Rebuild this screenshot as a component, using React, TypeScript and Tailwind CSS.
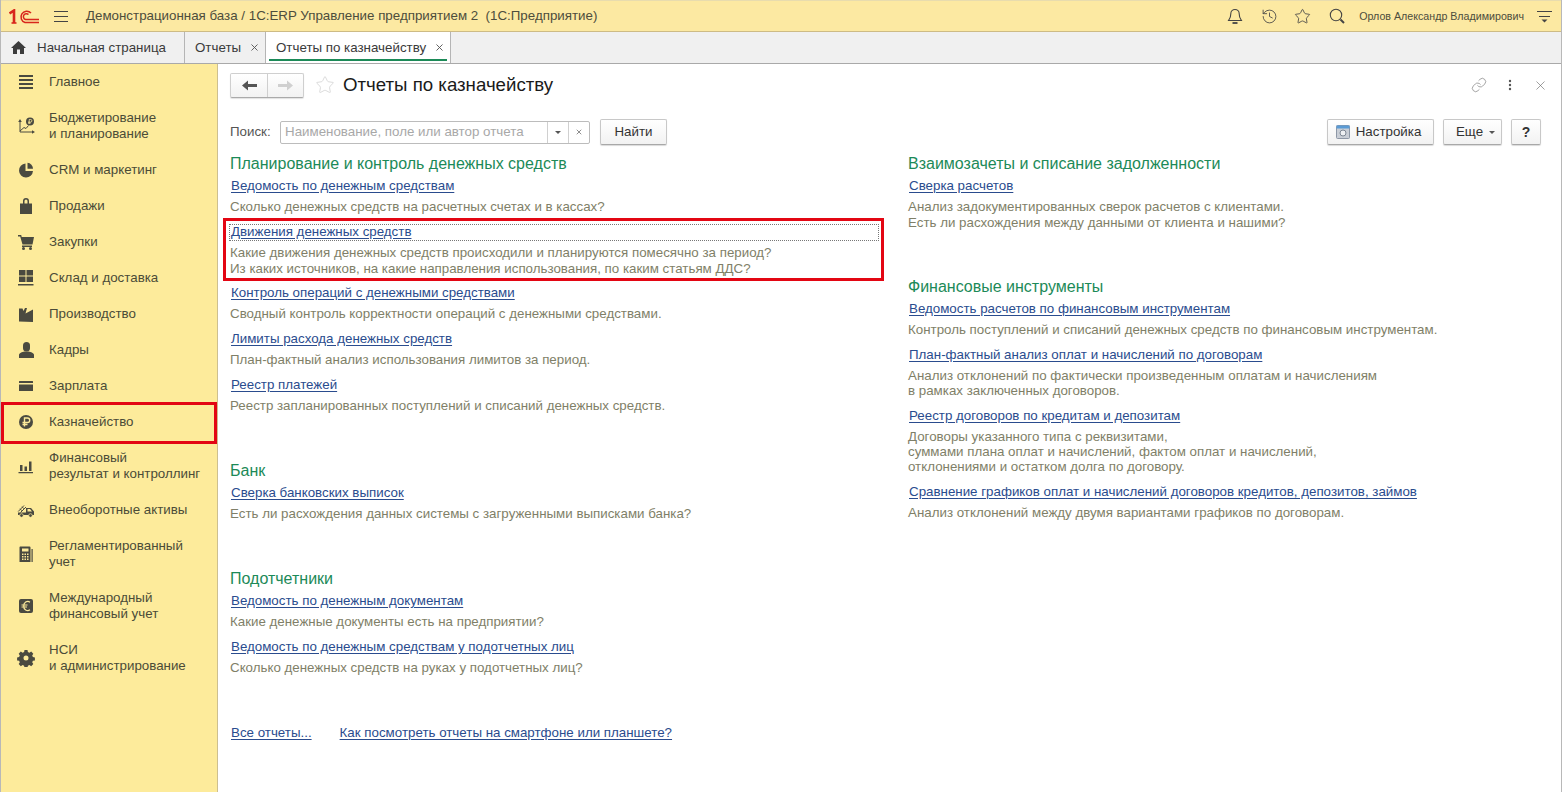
import { ReactNode } from "react";
import { X, History, Star, Link } from "lucide-react";

const fontStack = { fontFamily: '"Liberation Sans", Arial, sans-serif' };

function Logo() {
  return (
    <svg width="30" height="15" viewBox="0 0 30 15" fill="none" stroke="#d8261c">
      <path d="M0.500 4.500 L5 1.500 V14" strokeWidth="2.600" />
      <path d="M2.500 14 H7.500" strokeWidth="1.600" />
      <path d="M22 4 A5.800 5.800 0 1 0 16 13.500 H30" strokeWidth="1.500" />
      <path d="M19.500 5.500 A3 3 0 1 0 16.500 10.500 H30" strokeWidth="1.500" />
    </svg>
  );
}

const menuIcons: Record<string, ReactNode> = {
  main: <path d="M2 2h14v2H2zM2 6h14v2H2zM2 10h14v2H2zM2 14h14v2H2z" />,
  budget: (
    <>
      <path d="M3 4v11h13" fill="none" stroke="currentColor" strokeWidth="1" />
      <path d="M1.200 5l1.800-3 1.800 3zM15 13.200l3 1.800-3 1.800z" />
      <path d="M3 14l4-3.500 2 1 2.500-3" fill="none" stroke="currentColor" strokeWidth="1" />
      <circle cx="13" cy="4.500" r="4" />
      <path d="M12.200 7V2.500h1.400a1.200 1.200 0 0 1 0 2.600H11M11 6h2.800" fill="none" stroke="#fdeb9b" strokeWidth="0.800" />
    </>
  ),
  crm: (
    <>
      <path d="M8.500 2.500a7 7 0 1 0 7.500 7.500H8.500z" />
      <path d="M10.500 1.800a6 6 0 0 1 5.500 6h-5.500z" />
    </>
  ),
  sales: <path d="M3 6.500h3V4a3 3 0 0 1 6 0v2.500h3V17H3zM7.500 6.500h3V4a1.500 1.500 0 0 0-3 0z" fillRule="evenodd" />,
  buy: (
    <>
      <path d="M1 2h3.200l.5 2H17l-1.500 7.500H5.500L3.200 3.500H1z" />
      <rect x="5" y="12.500" width="10" height="1.500" />
      <circle cx="6.500" cy="15.500" r="1.500" />
      <circle cx="13.500" cy="15.500" r="1.500" />
    </>
  ),
  stock: <path d="M2 1h6.500v5.500H2zM9.500 1H16v5.500H9.500zM2 7.500h6.500V13H2zM9.500 7.500H16V13H9.500zM1 15h15.500v1.500H1z" />,
  factory: <path d="M2 16.500V3.500h3.500l1 2.500 1.500-3h2l-1.500 5.500 7.500-4v12.500z" />,
  staff: (
    <>
      <path d="M6 4.500a3.500 3.500 0 0 1 7 0V7a3.500 3.500 0 0 1-7 0z" />
      <path d="M2 17v-3c0-2 3-3 5.500-3.500h4c2.500.500 5.500 1.500 5.500 3.500v3z" />
    </>
  ),
  salary: <path d="M2.500 4h13a.500.500 0 0 1 .500.500V6H2V4.500a.500.500 0 0 1 .500-.500zM2 7.500h14V14H2z" />,
  treasury: (
    <>
      <circle cx="9" cy="9" r="7" />
      <path d="M7.500 13.500V5h3a2.200 2.200 0 0 1 0 4.500H5.500M5.500 11.500h5" fill="none" stroke="#fdeb9b" strokeWidth="1.400" />
    </>
  ),
  finance: <path d="M3 8h2.500v6H3zM7.500 9.500H10V14H7.500zM12 4.500h2.500V14H12zM1.500 15H16v1.300H1.500z" />,
  assets: (
    <>
      <path d="M1.200 10.500L7 4.500M3.500 11.500L9 6M3 7.800l2 2M5 5.800l2 2" fill="none" stroke="currentColor" strokeWidth="1" />
      <path fillRule="evenodd" d="M1 11.500h8V7h5l3 3.500V14H1zM10.500 8v2.500h4.500L13 8z" />
      <circle cx="4.500" cy="14.500" r="1.800" stroke="#fdeb9b" strokeWidth="0.700" />
      <circle cx="13.500" cy="14.500" r="1.800" stroke="#fdeb9b" strokeWidth="0.700" />
    </>
  ),
  reg: (
    <>
      <path
        fillRule="evenodd"
        d="M3 1.500h9.500a1 1 0 0 1 1 1V17h-11V2.500a1 1 0 0 1 .500-1zM5 3.500v3h6.500v-3zM5 8.500v1.500h1.500V8.500zM7.500 8.500v1.500H9V8.500zM10 8.500v1.500h1.500V8.500zM5 11v1.500h1.500V11zM7.500 11v1.500H9V11zM10 11v1.500h1.500V11zM5 13.500V15h1.500v-1.500zM7.500 13.500V15H9v-1.500zM10 13.500V15h1.500v-1.500z"
      />
      <rect x="14.500" y="4" width="1.200" height="13" />
    </>
  ),
  intl: (
    <>
      <rect x="2" y="2" width="14" height="14" rx="2" />
      <path d="M13 5.200A4 4 0 0 0 6.800 9 4 4 0 0 0 13 12.800M4.500 8h6M4.500 10h5.500" fill="none" stroke="#fdeb9b" strokeWidth="1.200" />
    </>
  ),
  admin: (
    <path
      fillRule="evenodd"
      d="M7.500 1.500h3l.4 2 1.500.7 1.800-1.100 2.100 2.100-1.100 1.800.7 1.500 2 .4v3l-2 .4-.7 1.500 1.100 1.800-2.100 2.100-1.800-1.100-1.500.7-.4 2h-3l-.4-2-1.500-.7-1.800 1.100-2.100-2.100 1.100-1.800-.7-1.500-2-.4v-3l2-.4.7-1.500-1.100-1.800 2.100-2.100 1.800 1.100 1.500-.7zM9 7a2.500 2.500 0 1 0 0 5 2.500 2.500 0 0 0 0-5z"
      transform="translate(0 -.5)"
    />
  ),
};

const menu: { icon: string; lines: string[]; marked?: boolean }[] = [
  { icon: "main", lines: ["Главное"] },
  { icon: "budget", lines: ["Бюджетирование", "и планирование"] },
  { icon: "crm", lines: ["CRM и маркетинг"] },
  { icon: "sales", lines: ["Продажи"] },
  { icon: "buy", lines: ["Закупки"] },
  { icon: "stock", lines: ["Склад и доставка"] },
  { icon: "factory", lines: ["Производство"] },
  { icon: "staff", lines: ["Кадры"] },
  { icon: "salary", lines: ["Зарплата"] },
  { icon: "treasury", lines: ["Казначейство"], marked: true },
  { icon: "finance", lines: ["Финансовый", "результат и контроллинг"] },
  { icon: "assets", lines: ["Внеоборотные активы"] },
  { icon: "reg", lines: ["Регламентированный", "учет"] },
  { icon: "intl", lines: ["Международный", "финансовый учет"] },
  { icon: "admin", lines: ["НСИ", "и администрирование"] },
];

function SidebarItem({ icon, lines, marked }: { icon: string; lines: string[]; marked?: boolean }) {
  return (
    <div className={`relative flex items-center pl-[16px] text-[#4b4b38] ${lines.length > 1 ? "h-[52px]" : "h-[36px]"}`}>
      <svg width="18" height="18" viewBox="0 0 18 18" fill="currentColor" className="shrink-0 text-[#4a4a40]">
        {menuIcons[icon]}
      </svg>
      <div className="ml-[14px] leading-[16px] -mt-px">
        {lines.map((l) => (
          <div key={l}>{l}</div>
        ))}
      </div>
      {marked && <div className="absolute left-0 right-0 top-[-2px] bottom-[-4px] border-[3px] border-[#e30613]" />}
    </div>
  );
}

function Heading({ children, className = "" }: { children: ReactNode; className?: string }) {
  return <div className={`text-[16px] leading-[18px] text-[#1c8a58] ${className}`}>{children}</div>;
}

function ReportLink({ children }: { children: ReactNode }) {
  return (
    <a className="block pl-px h-[16px] leading-[16px] text-[#2a4c8e] underline underline-offset-2 decoration-[#2a4c8e]">
      {children}
    </a>
  );
}

function Report({
  title,
  lines,
  tight,
  className = "",
}: {
  title: string;
  lines: string[];
  tight?: boolean;
  className?: string;
}) {
  return (
    <div className={className}>
      <ReportLink>{title}</ReportLink>
      <div className={`mt-[5px] text-[#7f7f68] ${tight ? "leading-[15px]" : "leading-[16px]"}`}>
        {lines.map((l) => (
          <div key={l}>{l}</div>
        ))}
      </div>
    </div>
  );
}

function Button({ children, className = "" }: { children: ReactNode; className?: string }) {
  return (
    <button
      className={`flex items-center justify-center h-[26px] rounded-[2px] border border-[#c8c8c8] border-b-[#a8a8a8] bg-gradient-to-b from-white to-[#f2f2f2] shadow-[0_1px_1px_rgba(0,0,0,0.15)] text-[#333] ${className}`}
    >
      {children}
    </button>
  );
}

export default function App() {
  return (
    <div
      style={fontStack}
      className="h-[792px] w-[1562px] flex flex-col overflow-hidden bg-white text-[13.33px] border-x border-[#b8b8b8]"
    >
      {/* top bar */}
      <div className="h-[32px] shrink-0 flex items-center bg-[#fce9a2] border-b border-[#cdbb85] border-t border-t-[#e8dcae] text-[#4d4d3c]">
        <div className="ml-[8px] w-[30px] h-[15px]">
          <Logo />
        </div>
        <div className="ml-[15px] flex flex-col gap-[4px]">
          <span className="block w-[14px] h-px bg-[#444]" />
          <span className="block w-[14px] h-px bg-[#444]" />
          <span className="block w-[14px] h-px bg-[#444]" />
        </div>
        <div className="ml-[18px] whitespace-pre">Демонстрационная база / 1С:ERP Управление предприятием 2  (1С:Предприятие)</div>
        <div className="ml-auto flex items-center text-[#444]">
          <svg width="16" height="17" viewBox="0 0 16 17" fill="none" stroke="#444" strokeWidth="1.100">
            <path d="M8 1.500a4.200 4.200 0 0 0-4.200 4.200c0 4-1.300 5-2.300 6.800h13c-1-1.800-2.300-2.800-2.300-6.800A4.200 4.200 0 0 0 8 1.500z" />
            <path d="M5.500 15h5" strokeWidth="1.800" />
          </svg>
          <History size={17} strokeWidth={1.2} className="ml-[18px]" />
          <Star size={17} strokeWidth={1.2} className="ml-[16px]" />
          <svg width="16" height="16" viewBox="0 0 16 16" fill="none" stroke="#444" className="ml-[18px]">
            <circle cx="7" cy="7" r="5.700" strokeWidth="1.100" />
            <path d="M11.500 11.500l3.500 3.500" strokeWidth="2" />
          </svg>
          <span className="ml-[14px] text-[10.67px] text-[#4d4d3c]">Орлов Александр Владимирович</span>
          <svg width="15" height="14" viewBox="0 0 15 14" fill="none" stroke="#444" className="ml-[13px] mr-[9px]">
            <path d="M0 2.500h15M2 7.500h11" />
            <path d="M4.500 10.500h6l-3 3z" fill="#444" stroke="none" />
          </svg>
        </div>
      </div>

      {/* tabs */}
      <div className="h-[32px] shrink-0 flex bg-[#f0f0f0] border-b border-[#a9a9a9] text-[#3a3a3a]">
        <div className="w-[184px] flex items-center border-r border-[#b5b5b5] pl-[10px]">
          <svg width="15" height="13" viewBox="0 0 15 13" fill="#3c3c3c">
            <path d="M7.500 0L15 7h-2v6H9V8.500H6V13H2V7H0z" />
          </svg>
          <span className="ml-[11px]">Начальная страница</span>
        </div>
        <div className="w-[81px] flex items-center border-r border-[#b5b5b5] pl-[10px]">
          Отчеты
          <X size={11} className="ml-[8px] text-[#555]" />
        </div>
        <div className="relative w-[185px] flex items-center border-r border-[#b5b5b5] bg-white pl-[10px]">
          Отчеты по казначейству
          <X size={11} className="ml-[8px] text-[#555]" />
          <div className="absolute left-[3px] right-[3px] bottom-[2px] h-[2px] bg-[#1c8a58]" />
        </div>
      </div>

      <div className="flex flex-1 min-h-0">
        {/* sidebar */}
        <div className="w-[217px] shrink-0 bg-[#fdeb9b] border-r border-[#cdbf8f]">
          {menu.map((m) => (
            <SidebarItem key={m.icon} {...m} />
          ))}
        </div>

        {/* form */}
        <div className="flex-1 min-w-0 pl-[12px] pr-[20px] text-[#333]">
          <div className="flex items-center h-[42px]">
            <div className="flex h-[25px] w-[74px] rounded-[2px] border border-[#cfcfcf] border-b-[#aaa] bg-gradient-to-b from-white to-[#f2f2f2] shadow-[0_1px_1px_rgba(0,0,0,0.12)]">
              <div className="flex-1 flex items-center justify-center border-r border-[#cfcfcf]">
                <svg width="15" height="11" viewBox="0 0 15 11" fill="#555">
                  <path d="M0 5.500L6 .5v3.500h9v3H6v3.500z" />
                </svg>
              </div>
              <div className="w-[35px] flex items-center justify-center">
                <svg width="15" height="11" viewBox="0 0 15 11" fill="#d0d0d0">
                  <path d="M15 5.500L9 .5v3.500H0v3h9v3.500z" />
                </svg>
              </div>
            </div>
            <Star size={20} strokeWidth={1} className="ml-[11px] text-[#d4d4d4]" />
            <div className="ml-[8px] text-[18.67px] text-[#1a1a1a]">Отчеты по казначейству</div>
            <div className="ml-auto flex items-center text-[#777]">
              <Link size={16} strokeWidth={1} />
              <svg width="4" height="12" viewBox="0 0 4 12" fill="#555" className="ml-[21px]">
                <circle cx="2" cy="2" r="1.200" />
                <circle cx="2" cy="6" r="1.200" />
                <circle cx="2" cy="10" r="1.200" />
              </svg>
              <X size={15} strokeWidth={1} className="ml-[21px] mr-[-7px] text-[#666]" />
            </div>
          </div>

          <div className="flex items-center h-[26px] mt-[13px]">
            <span className="w-[50px] text-[#555]">Поиск:</span>
            <div className="flex h-[23px] w-[310px] rounded-[2px] border border-[#bcbcbc]">
              <div className="flex-1 flex items-center pl-[4px] text-[#a8a8a8]">Наименование, поле или автор отчета</div>
              <div className="w-[21px] flex items-center justify-center border-l border-[#d0d0d0]">
                <div className="w-0 h-0 border-x-[3px] border-x-transparent border-t-[3px] border-t-[#555]" />
              </div>
              <div className="w-[21px] flex items-center justify-center border-l border-[#d0d0d0]">
                <X size={8} className="text-[#555]" />
              </div>
            </div>
            <Button className="ml-[10px] w-[67px]">Найти</Button>
            <Button className="ml-auto w-[107px] pr-[4px]">
              <svg width="14" height="14" viewBox="0 0 14 14" className="mr-[6px]">
                <rect x=".5" y=".5" width="13" height="13" rx="1" fill="#c9ced6" stroke="#8d97a6" />
                <rect x=".5" y=".5" width="13" height="3" fill="#5b9bd5" />
                <circle cx="7" cy="8" r="3" fill="#eef0f3" stroke="#7d8794" />
              </svg>
              Настройка
            </Button>
            <Button className="ml-[9px] w-[59px] pl-[6px]">
              Еще
              <span className="ml-[6px] w-0 h-0 border-x-[3px] border-x-transparent border-t-[3px] border-t-[#555]" />
            </Button>
            <Button className="ml-[9px] w-[30px] text-[14px] font-bold text-[#222]">?</Button>
          </div>

          <div className="grid grid-cols-[678px_1fr] mt-[10px]">
            {/* left */}
            <div>
              <Heading>Планирование и контроль денежных средств</Heading>
              <Report
                className="mt-[5px]"
                title="Ведомость по денежным средствам"
                lines={["Сколько денежных средств на расчетных счетах и в кассах?"]}
              />
              <div className="relative mt-[9px]">
                <Report
                  title="Движения денежных средств"
                  lines={[
                    "Какие движения денежных средств происходили и планируются помесячно за период?",
                    "Из каких источников, на какие направления использования, по каким статьям ДДС?",
                  ]}
                />
                <div className="absolute left-[-1px] top-0 w-[650px] h-[17px] border border-dotted border-[#777]" />
                <div className="absolute left-[-7px] top-[-6px] w-[661px] h-[63px] border-[3px] border-[#e30613]" />
              </div>
              <Report
                className="mt-[8px]"
                title="Контроль операций с денежными средствами"
                lines={["Сводный контроль корректности операций с денежными средствами."]}
              />
              <Report
                className="mt-[9px]"
                title="Лимиты расхода денежных средств"
                lines={["План-фактный анализ использования лимитов за период."]}
              />
              <Report
                className="mt-[9px]"
                title="Реестр платежей"
                lines={["Реестр запланированных поступлений и списаний денежных средств."]}
              />
              <Heading className="mt-[48px]">Банк</Heading>
              <Report
                className="mt-[5px]"
                title="Сверка банковских выписок"
                lines={["Есть ли расхождения данных системы с загруженными выписками банка?"]}
              />
              <Heading className="mt-[48px]">Подотчетники</Heading>
              <Report
                className="mt-[5px]"
                title="Ведомость по денежным документам"
                lines={["Какие денежные документы есть на предприятии?"]}
              />
              <Report
                className="mt-[9px]"
                title="Ведомость по денежным средствам у подотчетных лиц"
                lines={["Сколько денежных средств на руках у подотчетных лиц?"]}
              />
              <div className="flex mt-[49px]">
                <ReportLink>Все отчеты...</ReportLink>
                <div className="ml-[27px]">
                  <ReportLink>Как посмотреть отчеты на смартфоне или планшете?</ReportLink>
                </div>
              </div>
            </div>

            {/* right */}
            <div>
              <Heading>Взаимозачеты и списание задолженности</Heading>
              <Report
                className="mt-[5px]"
                title="Сверка расчетов"
                lines={[
                  "Анализ задокументированных сверок расчетов с клиентами.",
                  "Есть ли расхождения между данными от клиента и нашими?",
                ]}
              />
              <Heading className="mt-[47px]">Финансовые инструменты</Heading>
              <Report
                className="mt-[5px]"
                title="Ведомость расчетов по финансовым инструментам"
                lines={["Контроль поступлений и списаний денежных средств по финансовым инструментам."]}
              />
              <Report
                className="mt-[9px]"
                title="План-фактный анализ оплат и начислений по договорам"
                tight
                lines={[
                  "Анализ отклонений по фактически произведенным оплатам и начислениям",
                  "в рамках заключенных договоров.",
                ]}
              />
              <Report
                className="mt-[10px]"
                title="Реестр договоров по кредитам и депозитам"
                tight
                lines={[
                  "Договоры указанного типа с реквизитами,",
                  "суммами плана оплат и начислений, фактом оплат и начислений,",
                  "отклонениями и остатком долга по договору.",
                ]}
              />
              <Report
                className="mt-[10px]"
                title="Сравнение графиков оплат и начислений договоров кредитов, депозитов, займов"
                lines={["Анализ отклонений между двумя вариантами графиков по договорам."]}
              />
            </div>
          </div>
        </div>
      </div>
    </div>
  );
}
